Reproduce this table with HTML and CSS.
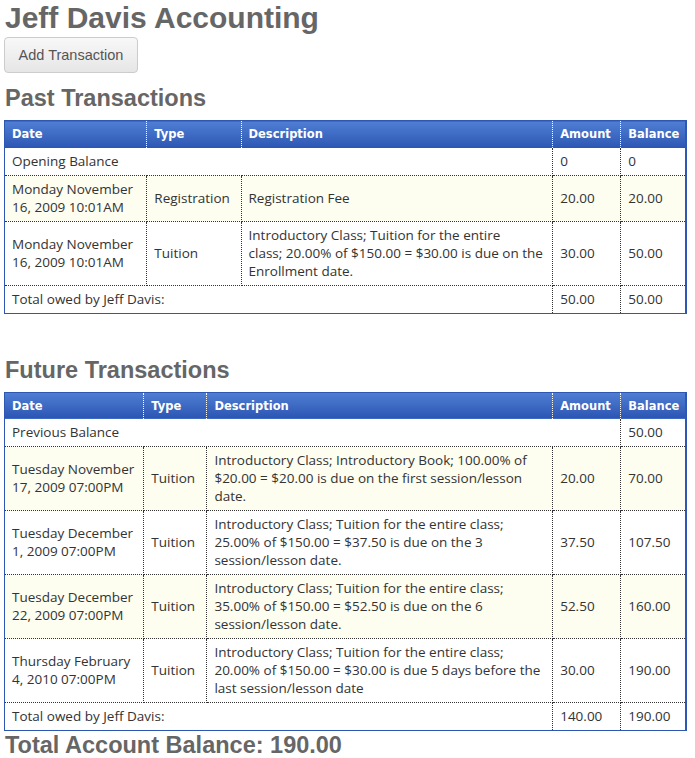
FILE: index.html
```html
<!DOCTYPE html>
<html>
<head>
<meta charset="utf-8">
<link rel="stylesheet" href="styles.css">
</head>
<body>
<div class="page">
  <h1 class="title">Jeff Davis Accounting</h1>
  <button class="btn">Add Transaction</button>
  <h2 class="section">Past Transactions</h2>
  <table class="tx past">
    <thead>
      <tr><th class="c-date">Date</th><th class="c-type">Type</th><th class="c-desc">Description</th><th class="c-amt">Amount</th><th class="c-bal">Balance</th></tr>
    </thead>
    <tbody>
      <tr><td colspan="3">Opening Balance</td><td>0</td><td>0</td></tr>
      <tr class="alt"><td>Monday November 16, 2009 10:01AM</td><td>Registration</td><td>Registration Fee</td><td>20.00</td><td>20.00</td></tr>
      <tr><td>Monday November 16, 2009 10:01AM</td><td>Tuition</td><td>Introductory Class; Tuition for the entire<br>class; 20.00% of $150.00 = $30.00 is due on the Enrollment date.</td><td>30.00</td><td>50.00</td></tr>
      <tr><td colspan="3">Total owed by Jeff Davis:</td><td>50.00</td><td>50.00</td></tr>
    </tbody>
  </table>
  <h2 class="section future-h">Future Transactions</h2>
  <table class="tx future">
    <thead>
      <tr><th class="c-date">Date</th><th class="c-type">Type</th><th class="c-desc">Description</th><th class="c-amt">Amount</th><th class="c-bal">Balance</th></tr>
    </thead>
    <tbody>
      <tr><td colspan="4">Previous Balance</td><td>50.00</td></tr>
      <tr class="alt"><td>Tuesday November 17, 2009 07:00PM</td><td>Tuition</td><td>Introductory Class; Introductory Book; 100.00% of $20.00 = $20.00 is due on the first session/lesson date.</td><td>20.00</td><td>70.00</td></tr>
      <tr><td>Tuesday December 1, 2009 07:00PM</td><td>Tuition</td><td>Introductory Class; Tuition for the entire class; 25.00% of $150.00 = $37.50 is due on the 3 session/lesson date.</td><td>37.50</td><td>107.50</td></tr>
      <tr class="alt"><td>Tuesday December 22, 2009 07:00PM</td><td>Tuition</td><td>Introductory Class; Tuition for the entire class; 35.00% of $150.00 = $52.50 is due on the 6 session/lesson date.</td><td>52.50</td><td>160.00</td></tr>
      <tr><td>Thursday February 4, 2010 07:00PM</td><td>Tuition</td><td>Introductory Class; Tuition for the entire class; 20.00% of $150.00 = $30.00 is due 5 days before the last session/lesson date</td><td>30.00</td><td>190.00</td></tr>
      <tr><td colspan="3">Total owed by Jeff Davis:</td><td>140.00</td><td>190.00</td></tr>
    </tbody>
  </table>
  <h2 class="section total">Total Account Balance: 190.00</h2>
</div>
</body>
</html>
```
FILE: styles.css
```css
html, body { margin: 0; padding: 0; background: #fff; }
.page { padding: 0 0 0 4px; width: 683px; }
.title {
  font-family: "Liberation Sans", Arial, sans-serif;
  font-weight: bold; font-size: 30px; color: #666;
  margin: 0; padding: 0 0 0 1px; line-height: 35px;
}
.btn {
  display: block; margin: 2px 0 0 0;
  width: 134px; height: 36px;
  border: 1px solid #ccc; border-radius: 4px;
  background: linear-gradient(#f8f8f8, #e6e6e6);
  font-family: "Liberation Sans", Arial, sans-serif;
  font-size: 14.5px; color: #555; padding: 0;
}
.section {
  font-family: "Liberation Sans", Arial, sans-serif;
  font-weight: bold; font-size: 23.5px; color: #666;
  margin: 11px 0 0 1px; line-height: 28px;
}
.future-h { margin-top: 42px; }
.total { margin-top: 0; }
.tx {
  width: 683px; border-collapse: collapse; table-layout: fixed;
  border: 1px solid #2d57b2; border-right-width: 2px;
  font-family: "Open Sans", sans-serif; font-size: 13.5px; color: #333;
}
.past { margin-top: 8px; }
.future { margin-top: 8px; }
.tx th {
  background: linear-gradient(#4f7fd3, #2c55b3);
  color: #fff; font-family: "DejaVu Sans", Verdana, sans-serif; font-size: 11.5px; font-weight: bold;
  text-align: left; height: 27px; padding: 0 6px 0 7px; box-sizing: border-box;
  border-left: 1px dotted #fff; white-space: nowrap;
}
.tx th:first-child { border-left: none; }
.tx td {
  padding: 4px 6px 5px 7px; line-height: 18px; vertical-align: middle;
  border: 1px dotted #333;
}
.tx tr td:first-child { border-left: none; }
.tx tr td:last-child { border-right: none; }
.tx tbody tr:first-child td { border-top: none; }
.tx tbody tr:last-child td { border-bottom: none; }
.tx tr.alt td { background: #fdfdf0; }
.past .c-date { width: 142px; }
.past .c-type { width: 94px; }
.past .c-desc { width: 311px; }
.past .c-amt { width: 68px; }
.past .c-bal { width: 65px; }
.future .c-date { width: 139px; }
.future .c-type { width: 63px; }
.future .c-desc { width: 345px; }
.future .c-amt { width: 68px; }
.future .c-bal { width: 65px; }
```
